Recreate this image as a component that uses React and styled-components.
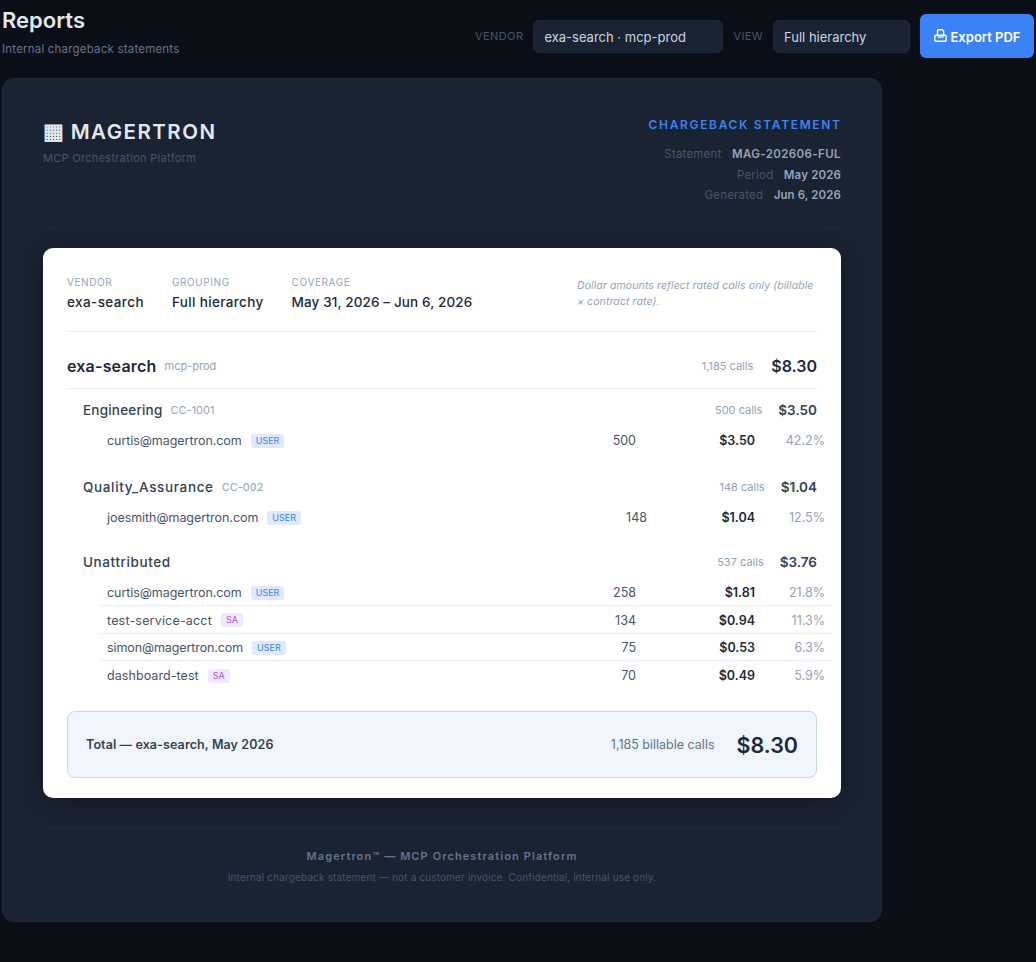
import React from "react";
import styled, { createGlobalStyle } from "styled-components";

const Global = createGlobalStyle`
  html, body { margin: 0; padding: 0; background: #0a0e17; }
  body { font-family: "Inter", "Noto Sans", sans-serif; min-height: 962px; }
  * { box-sizing: border-box; }
`;

const Page = styled.div`
  width: 1036px;
  padding: 0 2px 40px;
`;
const TopBar = styled.header`
  display: flex;
  justify-content: space-between;
  align-items: flex-start;
  height: 78px;
  padding-top: 7px;
`;
const TitleBlock = styled.div`display: flex; flex-direction: column;`;
const PageTitle = styled.h1`
  margin: 0;
  font-size: 22px;
  line-height: 26px;
  font-weight: 600;
  color: #e2e8f0;
`;
const PageSub = styled.p`
  margin: 8px 0 0;
  font-size: 11.5px;
  line-height: 16px;
  letter-spacing: 0.2px;
  color: #64748b;
`;
const Controls = styled.div`
  display: flex;
  align-items: center;
  padding-top: 7px;
`;
const CtlLabel = styled.label`
  font-size: 11px;
  letter-spacing: 0.4px;
  color: #475569;
  margin-right: 10px;
  text-transform: uppercase;
`;
const Select = styled.div`
  width: ${p => p.$w}px;
  height: 33px;
  margin-right: 10px;
  padding: 1px 10px 0;
  display: flex;
  align-items: center;
  background: #1a2332;
  border: 1px solid #1e293b;
  border-radius: 6px;
  font-size: 13px;
  color: #cbd5e1;
`;
const ExportBtn = styled.button`
  width: 114px;
  height: 44px;
  border: 0;
  border-radius: 6px;
  padding: 2px 0 0;
  background: #3b82f6;
  color: #fff;
  font: 600 13px "Inter", sans-serif;
  display: flex;
  align-items: center;
  justify-content: center;
  gap: 4px;
`;
const IconSvg = styled.svg`margin-top: -3px;`;

const Statement = styled.main`
  width: 880px;
  height: 844px;
  background: #1a2332;
  border: 1px solid #1e293b;
  border-radius: 12px;
  padding: 39px 40px;
`;
const Head = styled.div`
  display: flex;
  justify-content: space-between;
  height: 110px;
  border-bottom: 1px solid #1e293b;
`;
const Brand = styled.div`
  margin-top: -1px;
  font-size: 20.5px;
  line-height: 28px;
  font-weight: 600;
  letter-spacing: 1.5px;
  color: #e2e8f0;
`;
const BrandMark = styled.span`
  font-size: 22px;
  letter-spacing: 0;
`;
const Tagline = styled.div`
  margin-top: 5px;
  font-size: 11px;
  line-height: 14px;
  letter-spacing: 0.3px;
  color: #475569;
`;
const Meta = styled.div`
  text-align: right;
  display: flex;
  flex-direction: column;
  align-items: flex-end;
`;
const DocType = styled.div`
  font-size: 12px;
  line-height: 16px;
  font-weight: 600;
  letter-spacing: 1.65px;
  margin-right: -0.6px;
  color: #3b82f6;
  margin-top: -1px;
  margin-bottom: 11px;
`;
const MetaLine = styled.div`
  font-size: 11.5px;
  line-height: 20.5px;
  letter-spacing: 0.2px;
  color: #475569;
`;
const MetaValue = styled.b`
  font-weight: 600;
  color: #94a3b8;
  margin-left: 7px;
  letter-spacing: ${p => p.$ls}px;
`;

const Sheet = styled.section`
  margin-top: 20px;
  height: 550px;
  background: #fff;
  border-radius: 10px;
  padding: 24px;
  box-shadow: 0 4px 24px rgba(0,0,0,.3);
`;
const SheetMeta = styled.div`
  display: flex;
  height: 60px;
  border-bottom: 1px solid #e2e8f0;
  gap: 28px;
`;
const MetaCol = styled.div`display: flex; flex-direction: column; padding-top: 3px;`;
const MetaKey = styled.div`
  font-size: 10px;
  line-height: 14px;
  letter-spacing: 0.6px;
  color: #94a3b8;
  text-transform: uppercase;
`;
const MetaVal = styled.div`
  margin-top: 4px;
  font-size: 13.5px;
  line-height: 18px;
  font-weight: 500;
  letter-spacing: ${p => p.$ls}px;
  color: #1e293b;
`;
const Note = styled.div`
  margin-left: auto;
  margin-top: 6px;
  width: 240px;
  font-size: 10.5px;
  line-height: 16px;
  letter-spacing: 0.1px;
  font-style: italic;
  color: #94a3b8;
`;
const VendorRow = styled.div`
  display: flex;
  align-items: center;
  height: 57px;
  padding-top: 11px;
  border-bottom: 1px solid #e2e8f0;
`;
const VendorName = styled.span`font-size: 16px; letter-spacing: 0.2px; font-weight: 600; color: #1e293b;`;
const Tag = styled.span`
  margin-left: 8px;
  font-size: 11px;
  color: #94a3b8;
`;
const Spacer = styled.span`flex: 1;`;
const Calls = styled.span`font-size: 11px; color: #94a3b8; margin-right: ${p => p.$gap}px;`;
const VendorCost = styled.span`font-size: 16px; font-weight: 600; color: #1e293b;`;
const Group = styled.div`margin-bottom: ${p => p.$mb}px;`;
const GroupRow = styled.div`
  display: flex;
  align-items: center;
  height: 37px;
  padding: 4px 0 0 16px;
`;
const GroupName = styled.span`font-size: 13.5px; font-weight: 500; letter-spacing: ${p => p.$ls}px; color: #334155;`;
const GroupCost = styled.span`font-size: 13.5px; font-weight: 600; color: #334155;`;
const UserTable = styled.div`
  margin-left: 33px;
  width: 732px;
`;
const UserRow = styled.div`
  display: grid;
  grid-template-columns: ${p => p.$callsEnd}px ${p => 648 - p.$callsEnd}px 70px;
  grid-template-rows: 1fr;
  align-items: center;
  height: 27.5px;
  padding: 2px 7px 0;
  font-size: 12.5px;
  color: #475569;
  border-bottom: ${p => (p.$last ? "0" : "1px solid #e9eef5")};
`;
const UserName = styled.div`
  grid-column: 1;
  grid-row: 1;
  display: flex;
  align-items: center;
  gap: 9px;
  letter-spacing: ${p => p.$ls}px;
`;
const CallCount = styled.span`
  grid-column: 1;
  grid-row: 1;
  justify-self: end;
`;
const Cost = styled.span`grid-column: 2; grid-row: 1; text-align: right; font-weight: 600; color: #1e293b;`;
const Pct = styled.span`grid-column: 3; grid-row: 1; text-align: right; color: #94a3b8;`;
const Badge = styled.span`
  display: inline-block;
  padding: 0 5px;
  height: 14px;
  line-height: 14px;
  border-radius: 3px;
  font-size: 9px;
  letter-spacing: 0;
  background: ${p => (p.$sa ? "#f3e8ff" : "#e0e9fd")};
  color: ${p => (p.$sa ? "#a855f7" : "#3b82f6")};
`;
const TotalBox = styled.div`
  margin-top: 22.5px;
  height: 67px;
  display: flex;
  align-items: center;
  padding: 0 18px;
  background: #f1f5fe;
  border: 1px solid #c7d5f0;
  border-radius: 8px;
`;
const TotalLabel = styled.span`font-size: 12.5px; letter-spacing: 0.1px; font-weight: 600; color: #334155;`;
const TotalCalls = styled.span`font-size: 12.5px; color: #64748b; margin-right: 22px;`;
const TotalCost = styled.span`font-size: 21.5px; font-weight: 600; color: #1e293b;`;
const Foot = styled.footer`
  margin-top: 30px;
  border-top: 1px solid #1e293b;
  padding-top: 20px;
  text-align: center;
`;
const FootMain = styled.div`
  font-size: 11px;
  line-height: 15px;
  font-weight: 600;
  letter-spacing: 1.1px;
  color: #64748b;
`;
const FootSub = styled.div`
  margin-top: 6px;
  font-size: 10px;
  line-height: 14px;
  letter-spacing: 0.15px;
  color: #475569;
`;

const PrintIcon = () => (
  <IconSvg width="13" height="13" viewBox="0 0 13 13" fill="none" stroke="#fff" strokeWidth="1.4">
    <path d="M3.5 6.5V2C3.5 1.3 4 .8 4.7 .8H8.4L9.6 2V6.5" />
    <rect x="0.8" y="6.2" width="11.4" height="6" rx="1.2" />
    <path d="M3.5 8H9.6" />
  </IconSvg>
);

const groups = [
  { name: "Engineering", ls: 0.2, code: "CC-1001", calls: "500 calls", cost: "$3.50", callsEnd: 529, mb: 12.5, rows: [
    { n: "curtis@magertron.com", ls: -0.05, t: "USER", c: "500", d: "$3.50", p: "42.2%" },
  ]},
  { name: "Quality_Assurance", ls: 0.65, code: "CC-002", calls: "148 calls", cost: "$1.04", callsEnd: 540, mb: 11, rows: [
    { n: "joesmith@magertron.com", ls: -0.05, t: "USER", c: "148", d: "$1.04", p: "12.5%" },
  ]},
  { name: "Unattributed", ls: 0.6, code: "", calls: "537 calls", cost: "$3.76", callsEnd: 529, mb: 0, rows: [
    { n: "curtis@magertron.com", ls: -0.05, t: "USER", c: "258", d: "$1.81", p: "21.8%" },
    { n: "test-service-acct", ls: 0.18, t: "SA", c: "134", d: "$0.94", p: "11.3%" },
    { n: "simon@magertron.com", ls: -0.1, t: "USER", c: "75", d: "$0.53", p: "6.3%" },
    { n: "dashboard-test", ls: 0.07, t: "SA", c: "70", d: "$0.49", p: "5.9%" },
  ]},
];

export default function App() {
  return (
    <Page>
      <Global />
      <TopBar>
        <TitleBlock>
          <PageTitle>Reports</PageTitle>
          <PageSub>Internal chargeback statements</PageSub>
        </TitleBlock>
        <Controls>
          <CtlLabel>Vendor</CtlLabel>
          <Select $w={190}>exa-search · mcp-prod</Select>
          <CtlLabel>View</CtlLabel>
          <Select $w={137}>Full hierarchy</Select>
          <ExportBtn><PrintIcon /> Export PDF</ExportBtn>
        </Controls>
      </TopBar>
      <Statement>
        <Head>
          <div>
            <Brand><BrandMark>▦</BrandMark> MAGERTRON</Brand>
            <Tagline>MCP Orchestration Platform</Tagline>
          </div>
          <Meta>
            <DocType>CHARGEBACK STATEMENT</DocType>
            <MetaLine>Statement <MetaValue $ls={0.4}>MAG-202606-FUL</MetaValue></MetaLine>
            <MetaLine>Period <MetaValue $ls={0.15}>May 2026</MetaValue></MetaLine>
            <MetaLine>Generated <MetaValue $ls={0.1}>Jun 6, 2026</MetaValue></MetaLine>
          </Meta>
        </Head>
        <Sheet>
          <SheetMeta>
            <MetaCol><MetaKey>Vendor</MetaKey><MetaVal $ls={0.4}>exa-search</MetaVal></MetaCol>
            <MetaCol><MetaKey>Grouping</MetaKey><MetaVal $ls={0.35}>Full hierarchy</MetaVal></MetaCol>
            <MetaCol><MetaKey>Coverage</MetaKey><MetaVal $ls={0.12}>May 31, 2026 – Jun 6, 2026</MetaVal></MetaCol>
            <Note>Dollar amounts reflect rated calls only (billable × contract rate).</Note>
          </SheetMeta>
          <VendorRow>
            <VendorName>exa-search</VendorName>
            <Tag>mcp-prod</Tag>
            <Spacer />
            <Calls $gap={18}>1,185 calls</Calls>
            <VendorCost>$8.30</VendorCost>
          </VendorRow>
          {groups.map(g => (
            <Group key={g.name} $mb={g.mb}>
              <GroupRow>
                <GroupName $ls={g.ls}>{g.name}</GroupName>
                {g.code && <Tag>{g.code}</Tag>}
                <Spacer />
                <Calls $gap={16}>{g.calls}</Calls>
                <GroupCost>{g.cost}</GroupCost>
              </GroupRow>
              <UserTable>
                {g.rows.map((r, i) => (
                  <UserRow key={r.n} $callsEnd={g.callsEnd} $last={i === g.rows.length - 1}>
                    <UserName $ls={r.ls}>{r.n} <Badge $sa={r.t === "SA"}>{r.t}</Badge></UserName>
                    <CallCount>{r.c}</CallCount>
                    <Cost>{r.d}</Cost>
                    <Pct>{r.p}</Pct>
                  </UserRow>
                ))}
              </UserTable>
            </Group>
          ))}
          <TotalBox>
            <TotalLabel>Total — exa-search, May 2026</TotalLabel>
            <Spacer />
            <TotalCalls>1,185 billable calls</TotalCalls>
            <TotalCost>$8.30</TotalCost>
          </TotalBox>
        </Sheet>
        <Foot>
          <FootMain>Magertron™ — MCP Orchestration Platform</FootMain>
          <FootSub>Internal chargeback statement — not a customer invoice. Confidential, internal use only.</FootSub>
        </Foot>
      </Statement>
    </Page>
  );
}
